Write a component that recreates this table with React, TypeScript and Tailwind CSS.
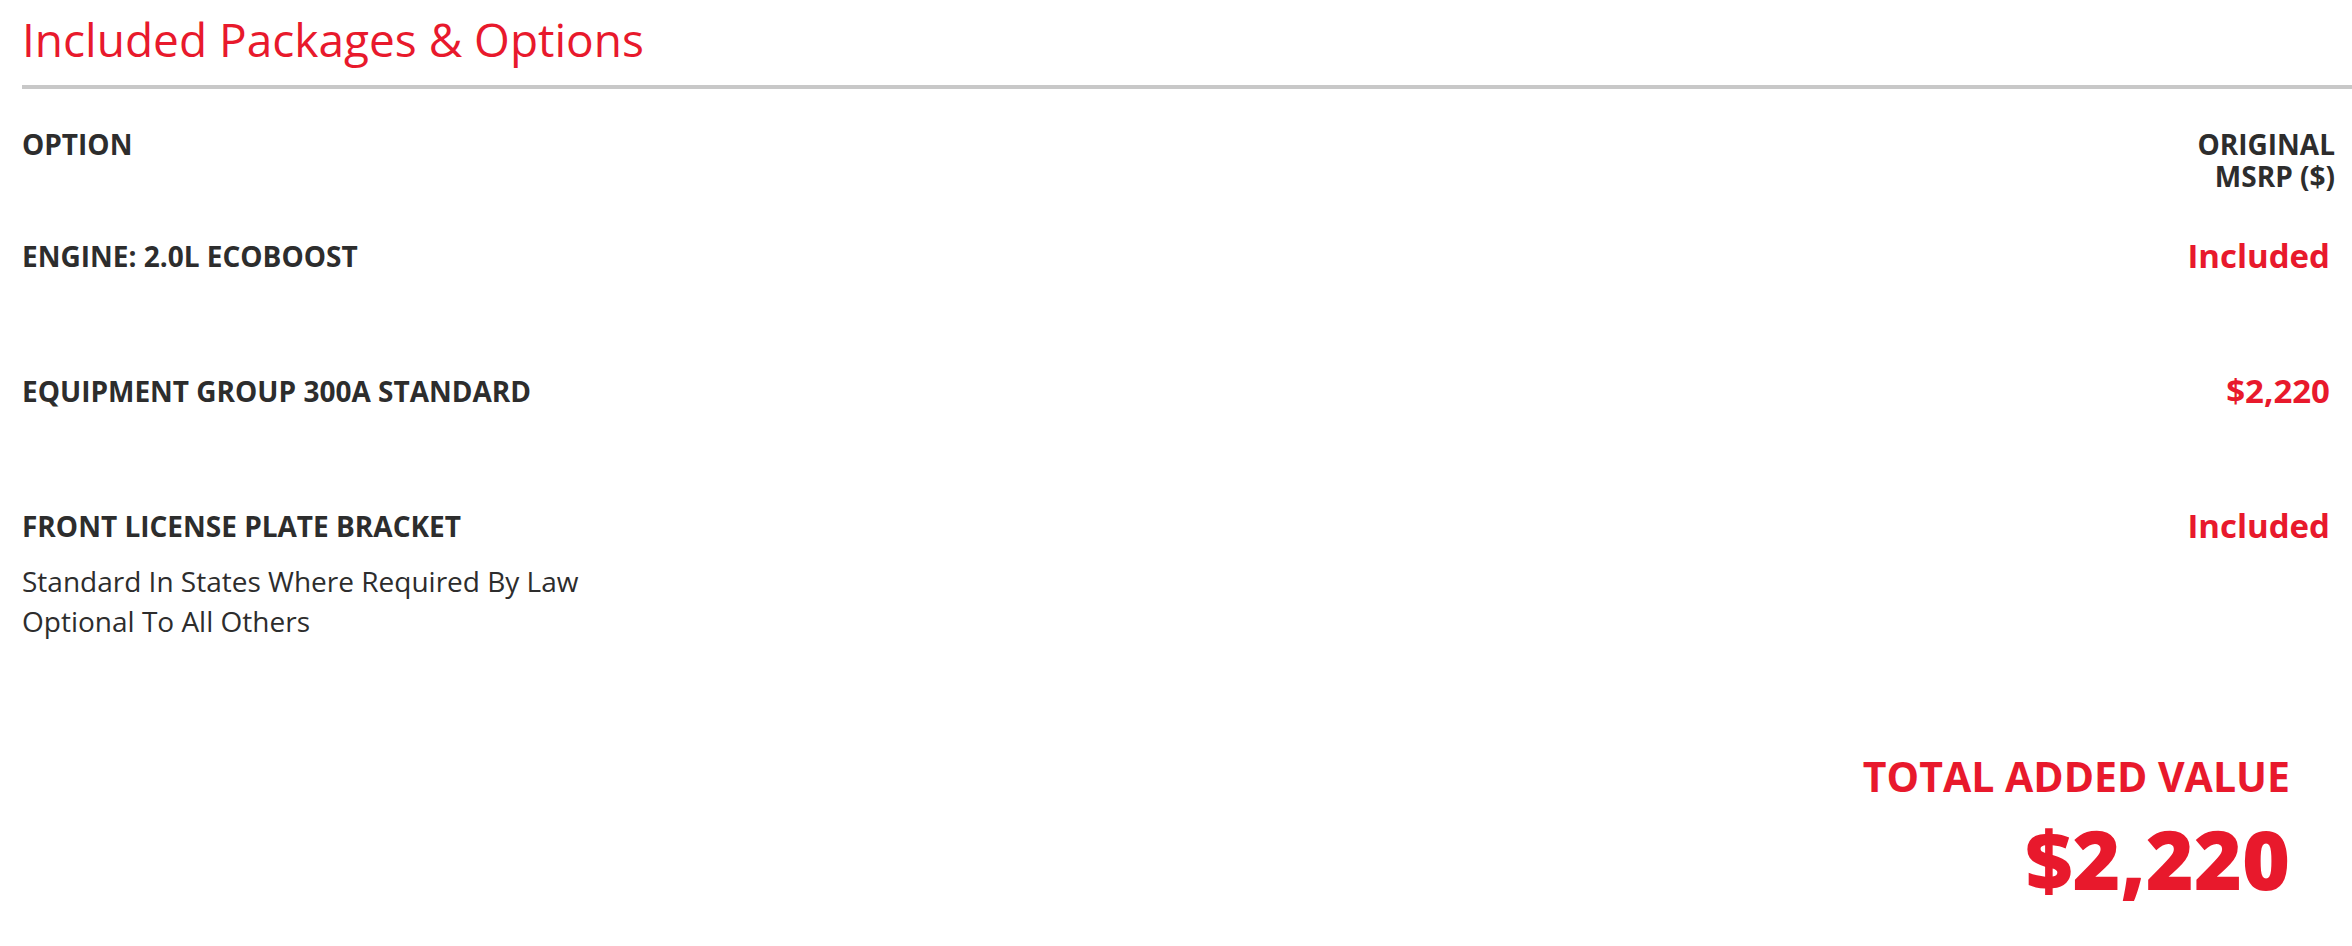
import React from 'react';

const rows = [
  { name: 'ENGINE: 2.0L ECOBOOST', price: 'Included', notes: [] as string[] },
  { name: 'EQUIPMENT GROUP 300A STANDARD', price: '$2,220', notes: [] as string[] },
  {
    name: 'FRONT LICENSE PLATE BRACKET',
    price: 'Included',
    notes: ['Standard In States Where Required By Law', 'Optional To All Others'],
  },
];

export default function App() {
  return (
    <div className="min-h-screen bg-white pl-[22px] text-[#2d2d2d]" style={{ fontFamily: '"Open Sans", "Liberation Sans", sans-serif' }}>
      <h1 className="pt-[12px] text-[46px] font-normal leading-[54px] text-[#e8192c]">Included Packages &amp; Options</h1>
      <div className="mt-[19px] h-[4px] bg-[#c8c8c8]" />

      <div className="pr-[17px]">
        {/* table head */}
        <div className="mt-[39px] flex items-start justify-between text-[28px] font-bold leading-[32px]">
          <div>OPTION</div>
          <div className="text-right">
            ORIGINAL
            <br />
            MSRP ($)
          </div>
        </div>

        {/* option rows */}
        <div className="mt-[44px]">
          {rows.map((row) => (
            <div key={row.name} className="flex min-h-[135px] items-start justify-between">
              <div>
                <div className="text-[28px] font-bold leading-[40.5px]">{row.name}</div>
                {row.notes.length > 0 && (
                  <div className="mt-[14px] text-[28px] font-normal leading-[40.5px]">
                    {row.notes.map((n) => (
                      <div key={n}>{n}</div>
                    ))}
                  </div>
                )}
              </div>
              <div className="pr-[5px] text-[33px] font-bold leading-[40px] text-[#e8192c]">{row.price}</div>
            </div>
          ))}
        </div>

        {/* total */}
        <div className="mt-[110px] flex flex-col items-end pr-[45px] text-[#e8192c]">
          <div className="text-[41px] font-bold leading-[48px]">TOTAL ADDED VALUE</div>
          <div className="mt-[16px] text-[82px] font-extrabold leading-[84px]">$2,220</div>
        </div>
      </div>
    </div>
  );
}
